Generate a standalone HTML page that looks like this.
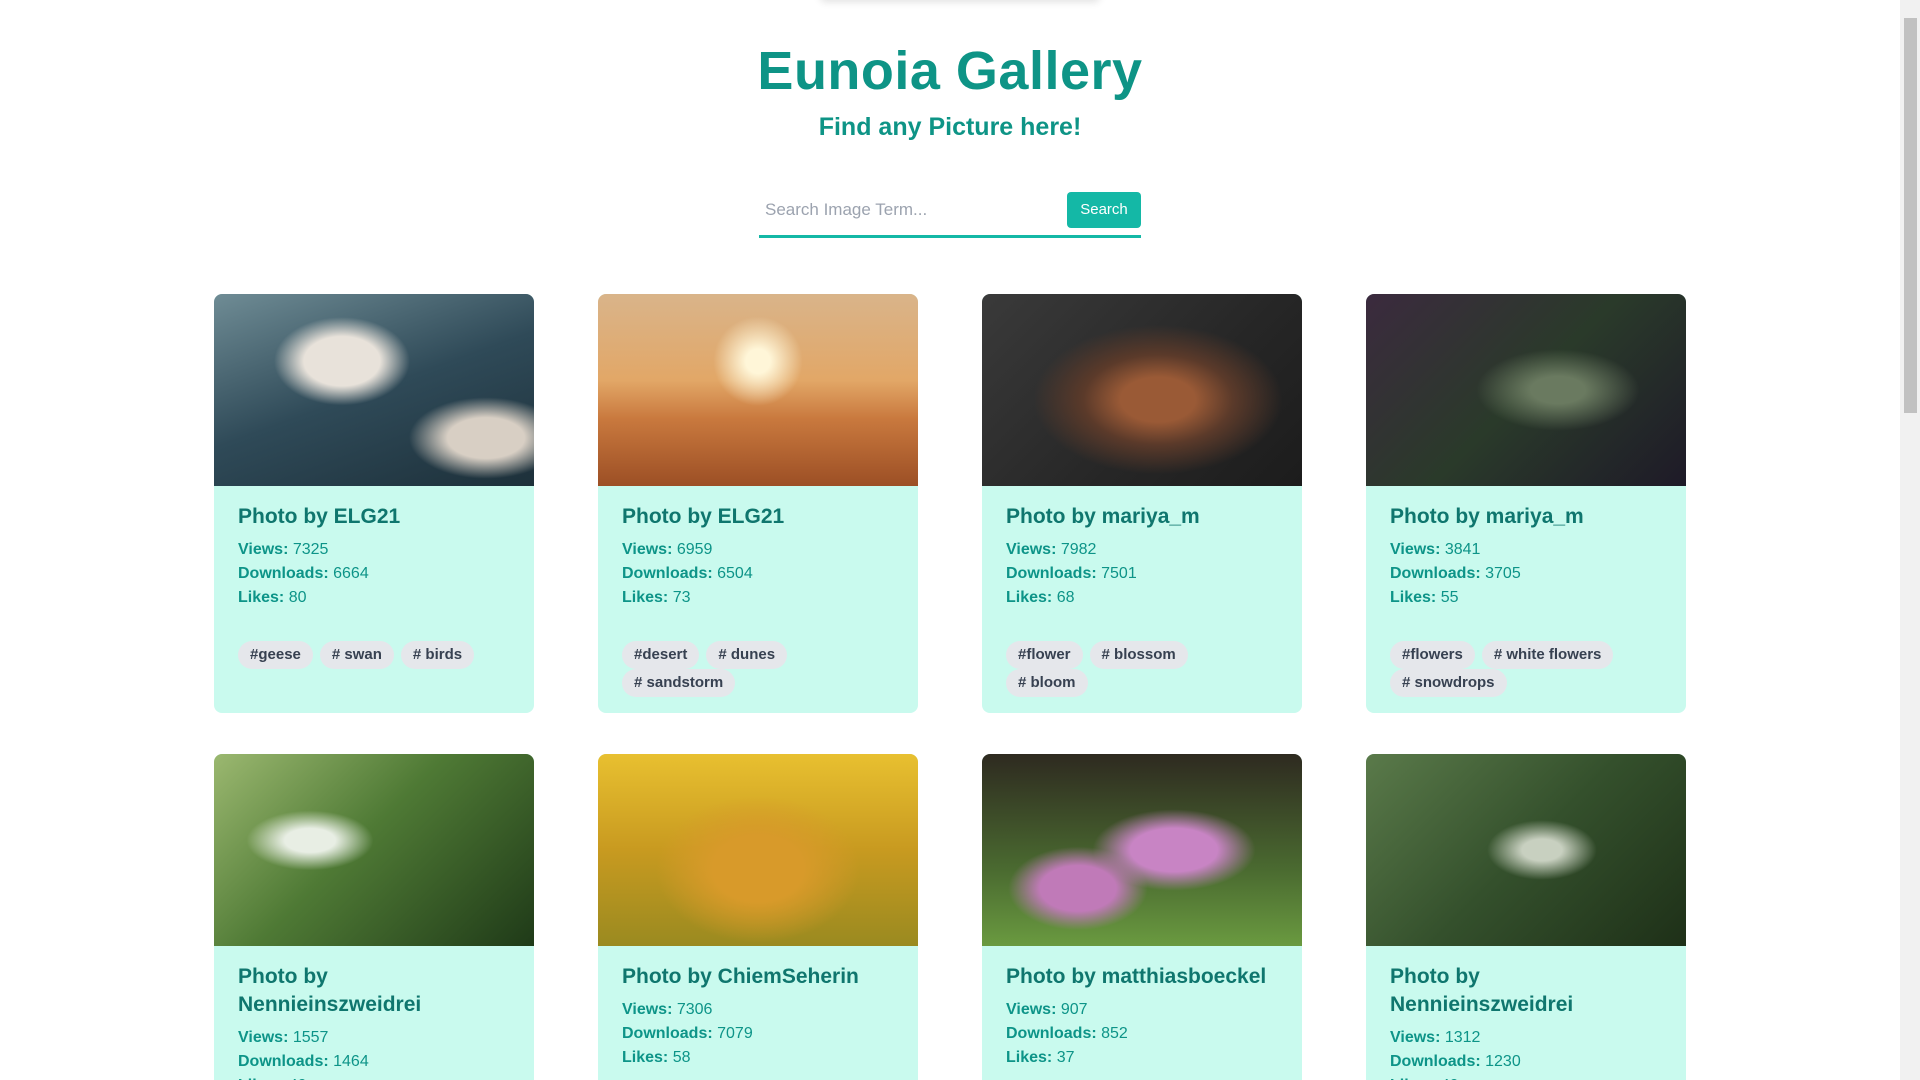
<!DOCTYPE html>
<html><head><meta charset="utf-8"><style>
*{margin:0;padding:0;box-sizing:border-box}
html,body{width:1920px;height:1080px;overflow:hidden;background:#fff;font-family:"Liberation Sans",sans-serif}
.wrap{position:relative;width:1920px;height:1080px;overflow:hidden}
.shadow{position:absolute;left:820px;top:-10px;width:280px;height:10px;box-shadow:0 2px 8px rgba(0,0,0,.12);border-radius:6px}
h1{position:absolute;left:0;width:1900px;top:40px;text-align:center;color:#0e9486;font-size:54px;font-weight:bold;letter-spacing:0.5px}
h2{position:absolute;left:0;width:1900px;top:113px;text-align:center;color:#0e9486;font-size:25px;font-weight:bold}
.search{position:absolute;left:759px;top:190px;width:382px;height:48px;border-bottom:3px solid #14b8a6}
.search span{position:absolute;left:6px;top:10px;color:#9ca3af;font-size:17px}
.search b{position:absolute;right:0;top:2px;width:74px;height:36px;background:#14b8a6;color:#fff;border-radius:4px;font-size:15px;font-weight:normal;text-align:center;line-height:36px}
.card{position:absolute;width:320px;height:419px;background:#c9faee;border-radius:8px;overflow:hidden}
.img{height:192px}
.body{padding:17px 24px}
.t{color:#0f766e;font-size:21px;font-weight:bold;line-height:28px;margin-bottom:7px}
.s{color:#0d9488;font-size:16px;line-height:24px}
.s b{color:#0d9488}
.tags{margin-top:31px}
.tag{display:inline-block;background:#e5e7eb;color:#374151;font-size:15px;font-weight:bold;padding:0 12px;height:28px;line-height:28px;border-radius:14px;margin:0 7px 0 0}
.sb{position:absolute;left:1900px;top:0;width:20px;height:1080px;background:#f1f1f1}
.sb div{position:absolute;left:4px;top:18px;width:13px;height:395px;background:#c1c1c1}
</style></head><body><div class="wrap">
<div class="shadow"></div>
<h1>Eunoia Gallery</h1>
<h2>Find any Picture here!</h2>
<div class="search"><span>Search Image Term...</span><b>Search</b></div>

<div class="card" style="left:214px;top:294px"><div class="img" style="background:radial-gradient(ellipse at 40% 35%,#e8e2da 0 14%,transparent 25%),radial-gradient(ellipse at 85% 75%,#d8cfc4 0 10%,transparent 20%),linear-gradient(160deg,#6f8c95,#2f4a58 50%,#1d303a)"></div><div class="body"><div class="t">Photo by ELG21</div><div class="s"><b>Views:</b> 7325</div><div class="s"><b>Downloads:</b> 6664</div><div class="s"><b>Likes:</b> 80</div><div class="tags"><span class="tag">#geese</span><span class="tag"># swan</span><span class="tag"># birds</span></div></div></div>

<div class="card" style="left:598px;top:294px"><div class="img" style="background:radial-gradient(circle at 50% 35%,#fff6d8 0 6%,transparent 22%),linear-gradient(180deg,#d9b48a,#e2a767 45%,#c9793e 65%,#9c4f25)"></div><div class="body"><div class="t">Photo by ELG21</div><div class="s"><b>Views:</b> 6959</div><div class="s"><b>Downloads:</b> 6504</div><div class="s"><b>Likes:</b> 73</div><div class="tags"><span class="tag">#desert</span><span class="tag"># dunes</span><br><span class="tag"># sandstorm</span></div></div></div>

<div class="card" style="left:982px;top:294px"><div class="img" style="background:radial-gradient(ellipse at 55% 55%,#9a5a36 0 15%,#5b3a2a 30%,transparent 50%),linear-gradient(135deg,#3a3a3a,#262626 60%,#1c1c1c)"></div><div class="body"><div class="t">Photo by mariya_m</div><div class="s"><b>Views:</b> 7982</div><div class="s"><b>Downloads:</b> 7501</div><div class="s"><b>Likes:</b> 68</div><div class="tags"><span class="tag">#flower</span><span class="tag"># blossom</span><br><span class="tag"># bloom</span></div></div></div>

<div class="card" style="left:1366px;top:294px"><div class="img" style="background:radial-gradient(ellipse at 60% 50%,#6a7a60 0 10%,transparent 30%),linear-gradient(135deg,#3b2a3e,#2a3a2a 50%,#1e1a28)"></div><div class="body"><div class="t">Photo by mariya_m</div><div class="s"><b>Views:</b> 3841</div><div class="s"><b>Downloads:</b> 3705</div><div class="s"><b>Likes:</b> 55</div><div class="tags"><span class="tag">#flowers</span><span class="tag"># white flowers</span><br><span class="tag"># snowdrops</span></div></div></div>

<div class="card" style="left:214px;top:754px;height:326px;border-radius:8px 8px 0 0"><div class="img" style="background:radial-gradient(ellipse at 30% 45%,#e8eee4 0 8%,transparent 20%),linear-gradient(135deg,#9bb870,#4f7a35 45%,#1f3a18)"></div><div class="body"><div class="t">Photo by<br>Nennieinszweidrei</div><div class="s"><b>Views:</b> 1557</div><div class="s"><b>Downloads:</b> 1464</div><div class="s"><b>Likes:</b> 40</div></div></div>

<div class="card" style="left:598px;top:754px;height:326px;border-radius:8px 8px 0 0"><div class="img" style="background:radial-gradient(ellipse at 50% 60%,#d89a2a 0 20%,transparent 45%),linear-gradient(180deg,#e8c030,#c89a20 50%,#9a8a20)"></div><div class="body"><div class="t">Photo by ChiemSeherin</div><div class="s"><b>Views:</b> 7306</div><div class="s"><b>Downloads:</b> 7079</div><div class="s"><b>Likes:</b> 58</div></div></div>

<div class="card" style="left:982px;top:754px;height:326px;border-radius:8px 8px 0 0"><div class="img" style="background:radial-gradient(ellipse at 30% 70%,#c07ab8 0 12%,transparent 22%),radial-gradient(ellipse at 60% 50%,#c884c4 0 16%,transparent 30%),linear-gradient(180deg,#2e2a20,#4a6a30 60%,#6a9a40)"></div><div class="body"><div class="t">Photo by matthiasboeckel</div><div class="s"><b>Views:</b> 907</div><div class="s"><b>Downloads:</b> 852</div><div class="s"><b>Likes:</b> 37</div></div></div>

<div class="card" style="left:1366px;top:754px;height:326px;border-radius:8px 8px 0 0"><div class="img" style="background:radial-gradient(ellipse at 55% 50%,#c8d0c0 0 8%,transparent 22%),linear-gradient(135deg,#5a7a4a,#34502c 50%,#1e3018)"></div><div class="body"><div class="t">Photo by<br>Nennieinszweidrei</div><div class="s"><b>Views:</b> 1312</div><div class="s"><b>Downloads:</b> 1230</div><div class="s"><b>Likes:</b> 40</div></div></div>

<div class="sb"><div></div></div>
</div></body></html>
